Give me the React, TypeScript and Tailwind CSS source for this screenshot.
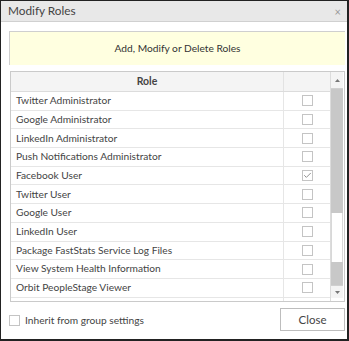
import { Check } from "lucide-react";

const ROLES = [
  { name: "Twitter Administrator", checked: false },
  { name: "Google Administrator", checked: false },
  { name: "LinkedIn Administrator", checked: false },
  { name: "Push Notifications Administrator", checked: false },
  { name: "Facebook User", checked: true },
  { name: "Twitter User", checked: false },
  { name: "Google User", checked: false },
  { name: "LinkedIn User", checked: false },
  { name: "Package FastStats Service Log Files", checked: false },
  { name: "View System Health Information", checked: false },
  { name: "Orbit PeopleStage Viewer", checked: false },
];

function Box({ checked }: { checked?: boolean }) {
  return (
    <span className="w-[11px] h-[11px] border border-[#c4c4c4] bg-white flex items-center justify-center">
      {checked && <Check className="w-[9px] h-[9px] text-[#8a8a8a]" strokeWidth={2.5} />}
    </span>
  );
}

export default function App() {
  return (
    <div
      className="w-[349px] h-[341px] bg-white border-t border-l border-r-2 border-b-2 border-[#222] flex flex-col text-[#333]"
      style={{ fontFamily: 'Lato, "Open Sans", sans-serif' }}
    >
      {/* title bar */}
      <div className="h-[21px] shrink-0 bg-[#e8e8e8] border-b border-[#d0d0d0] flex items-center justify-between pl-[7px] pr-[6px]">
        <span className="text-[11.8px] text-[#444] leading-none">Modify Roles</span>
        <span className="text-[11px] text-[#999] leading-none">×</span>
      </div>

      <div className="flex-1 flex flex-col pl-[8px] pr-[2px]">
        <div className="mt-[9px] h-[34px] bg-[#ffffe0] border-t border-l border-[#cfcfcf] flex items-center justify-center text-[10.2px] text-[#333]">
          Add, Modify or Delete Roles
        </div>

        {/* table */}
        <div className="mt-[6px] ml-[1px] h-[231px] border border-[#cacaca] flex overflow-hidden">
          <div className="flex-1 flex flex-col overflow-hidden">
            <div className="h-[20px] shrink-0 bg-[#f4f4f4] border-b border-[#dcdcdc] flex">
              <div className="flex-1 border-r border-[#e2e2e2] flex items-center justify-center text-[10.5px] font-bold text-[#444]">
                Role
              </div>
              <div className="w-[46px]" />
            </div>
            {ROLES.map((r) => (
              <div key={r.name} className="h-[18.7px] shrink-0 border-b border-[#e6e6e6] flex">
                <div className="flex-1 border-r border-[#e6e6e6] flex items-center pl-[5px] text-[10.2px] text-[#444] whitespace-nowrap">
                  {r.name}
                </div>
                <div className="w-[46px] flex items-center justify-center">
                  <Box checked={r.checked} />
                </div>
              </div>
            ))}
            {/* partially hidden next row */}
            <div className="h-[18.7px] shrink-0 flex">
              <div className="flex-1 border-r border-[#e6e6e6]" />
              <div className="w-[46px]" />
            </div>
          </div>

          {/* scrollbar */}
          <div className="w-[13px] shrink-0 border-l border-[#dcdcdc] flex flex-col mr-[1px]">
            <div className="h-[17px] shrink-0 bg-[#f4f4f4] border-b border-[#d0d0d0] flex items-center justify-center">
              <svg width="5" height="3" viewBox="0 0 5 3">
                <path d="M0 3 L2.5 0 L5 3 Z" fill="#777" />
              </svg>
            </div>
            <div className="h-[124px] bg-[#c8c8c8]" />
            <div className="h-[49px] bg-white border-x border-[#d8d8d8]" />
            <div className="flex-1 bg-[#c8c8c8]" />
            <div className="h-[13px] shrink-0 bg-[#f4f4f4] border-t border-[#d0d0d0] flex items-center justify-center">
              <svg width="5" height="3" viewBox="0 0 5 3">
                <path d="M0 0 L2.5 3 L5 0 Z" fill="#777" />
              </svg>
            </div>
            <div className="h-[3px] shrink-0" />
          </div>
        </div>

        {/* footer */}
        <div className="mt-[6px] flex items-center justify-between">
          <label className="flex items-center gap-[5px] mt-[2px]">
            <Box />
            <span className="text-[10.2px] text-[#444]">Inherit from group settings</span>
          </label>
          <button className="w-[65px] h-[23px] bg-white border border-[#bdbdbd] text-[11.5px] text-[#444]">
            Close
          </button>
        </div>
      </div>
    </div>
  );
}
